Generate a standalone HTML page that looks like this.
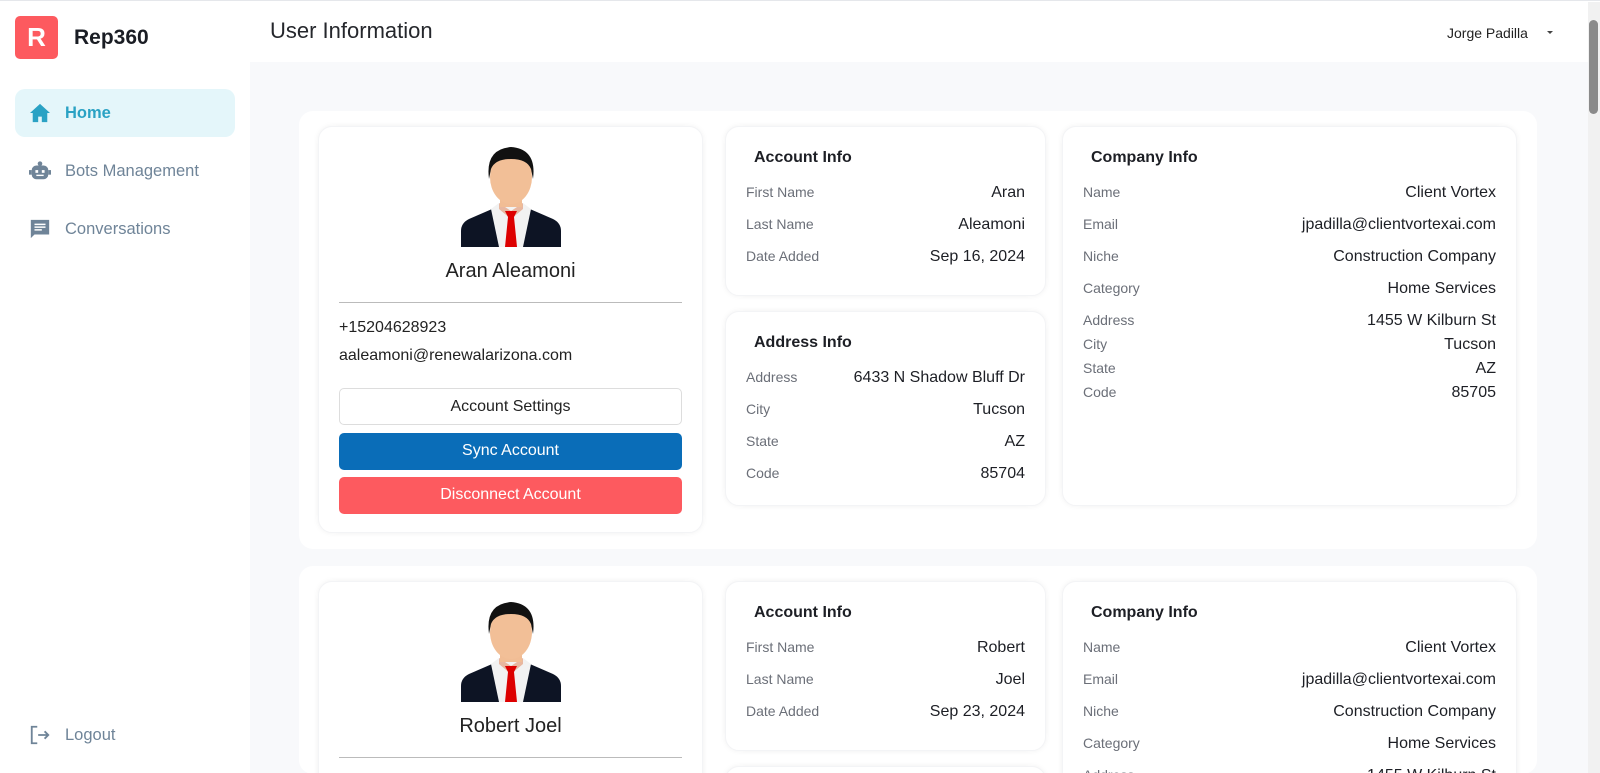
<!DOCTYPE html>
<html style="width:1600px;height:773px;overflow:hidden"><head><style>
*{box-sizing:border-box;margin:0;padding:0}
body{width:1600px;height:773px;overflow:hidden;font-family:"Liberation Sans",sans-serif;background:#fff;color:#1e1e24;position:relative;border-top:1px solid #e5e7eb}
.sb{position:absolute;left:0;top:0;width:250px;height:773px;background:#fff}
.logo{position:absolute;left:15px;top:15px;width:43px;height:43px;background:#fd5a5f;border-radius:5px;color:#fff;font-weight:bold;font-size:26px;text-align:center;line-height:43px}
.brand{position:absolute;left:74px;top:25px;font-size:21px;font-weight:bold;color:#1a1d24}
.nav{position:absolute;left:15px;width:220px;height:48px;border-radius:10px;display:flex;align-items:center;padding-left:14px;font-size:16.5px;color:#6f8498}
.nav svg{margin-right:14px}
.nav.act{background:#e4f6fa;color:#2aa2c4;font-weight:bold}
.main{position:absolute;left:250px;top:61px;width:1338px;height:712px;background:#f8f9fb}
.title{position:absolute;left:270px;top:17px;font-size:22px;color:#25272c}
.user{position:absolute;left:1447px;top:24px;font-size:14px;color:#222}
.caret{position:absolute;left:1547px;top:30px;border:3px solid transparent;border-top:3px solid #444}
.scroll{position:absolute;left:1588px;top:1px;width:12px;height:772px;background:#f1f1f1}
.thumb{position:absolute;left:1589px;top:19px;width:9px;height:94px;background:#8a8a8a;border-radius:5px}
.sec{position:absolute;left:299px;width:1238px;background:#fff;border-radius:14px;overflow:hidden}
.card{position:absolute;background:#fff;border-radius:14px;box-shadow:0 0 6px rgba(0,0,0,.06);border:1px solid #f3f4f6}
.av{position:absolute;left:142px;top:20px}
.nm{position:absolute;left:0;width:100%;text-align:center;top:133px;font-size:20px;color:#222}
.hr{position:absolute;left:20px;right:20px;top:175px;border-top:1px solid #bbb}
.ct{position:absolute;left:20px;font-size:16px;color:#222}
.btn{position:absolute;left:20px;right:20px;height:37px;border-radius:5px;text-align:center;line-height:36px;font-size:16px}
.h{position:absolute;left:28px;top:22px;font-size:16px;font-weight:bold;color:#1d1f25}
.r{position:absolute;left:20px;right:20px;font-size:14px;color:#6b6f78}
.r b{position:absolute;right:0;top:0;font-weight:normal;font-size:16px;color:#1d1f25}
</style></head><body>
<div class="sb">
<div class="logo">R</div><div class="brand">Rep360</div>
<div class="nav act" style="top:88px"><svg width="22" height="20" viewBox="0 0 24 22"><path d="M12 1L1 11h3v10h6v-6h4v6h6V11h3z" fill="#2aa2c4"/></svg>Home</div>
<div class="nav" style="top:146px"><svg width="22" height="22" viewBox="0 0 24 24"><circle cx="12" cy="4" r="2.5" fill="#6f8498"/><rect x="3" y="6" width="18" height="15" rx="5" fill="#6f8498"/><rect x="0" y="11" width="3" height="5" fill="#6f8498"/><rect x="21" y="11" width="3" height="5" fill="#6f8498"/><rect x="7" y="11" width="3" height="3" fill="#fff"/><rect x="14" y="11" width="3" height="3" fill="#fff"/><rect x="8" y="16" width="8" height="1.5" fill="#fff"/></svg>Bots Management</div>
<div class="nav" style="top:204px"><svg width="22" height="22" viewBox="0 0 24 24"><path d="M2 2h20v16H6l-4 4z" fill="#6f8498"/><path d="M6 7h12M6 10h12M6 13h8" stroke="#fff" stroke-width="1.6"/></svg>Conversations</div>
<div class="nav" style="top:710px"><svg width="22" height="22" viewBox="0 0 24 24" fill="none" stroke="#6f8498" stroke-width="2"><path d="M9 3H3v18h6M10 12h11M17 8l4 4-4 4"/></svg>Logout</div>
</div>
<div class="title">User Information</div>
<div class="user">Jorge Padilla</div><div class="caret"></div>
<div class="main"></div>
<div class="scroll"></div><div class="thumb"></div>

<div class="sec" style="top:110px;height:438px">
 <div class="card" style="left:19px;top:15px;width:385px;height:407px">
  <svg class="av" width="100" height="100" viewBox="0 0 100 100"><path d="M0 84q0-8 8-12l30-13h24l30 13q8 4 8 12v16H0z" fill="#0d1424"/><path d="M30 62l8-6h24l8 6-8 38H38z" fill="#f2f2f2"/><path d="M38 56l12 8 12-8v6L50 72 38 62z" fill="#e8b7a0"/><rect x="39" y="36" width="22" height="24" fill="#f1bd95"/><ellipse cx="50" cy="30" rx="21" ry="27" fill="#f2bf97"/><path d="M28 32q-4-30 22-32q26 2 22 32l-2-10q-4-10-20-10q-16 0-20 10z" fill="#111"/><path d="M44 64h12l-3 6 3 30H44l3-30z" fill="#d00"/></svg>
  <div class="nm">Aran Aleamoni</div><div class="hr"></div>
  <div class="ct" style="top:192px">+15204628923</div>
  <div class="ct" style="top:220px">aaleamoni@renewalarizona.com</div>
  <div class="btn" style="top:261px;border:1px solid #ddd;color:#222">Account Settings</div>
  <div class="btn" style="top:306px;background:#0a6db8;color:#fff">Sync Account</div>
  <div class="btn" style="top:350px;background:#fd5a5f;color:#fff">Disconnect Account</div>
 </div>
 <div class="card" style="left:426px;top:15px;width:321px;height:170px">
  <div class="h">Account Info</div>
  <div class="r" style="top:57px">First Name<b>Aran</b></div>
  <div class="r" style="top:89px">Last Name<b>Aleamoni</b></div>
  <div class="r" style="top:121px">Date Added<b>Sep 16, 2024</b></div>
 </div>
 <div class="card" style="left:426px;top:200px;width:321px;height:195px">
  <div class="h">Address Info</div>
  <div class="r" style="top:57px">Address<b>6433 N Shadow Bluff Dr</b></div>
  <div class="r" style="top:89px">City<b>Tucson</b></div>
  <div class="r" style="top:121px">State<b>AZ</b></div>
  <div class="r" style="top:153px">Code<b>85704</b></div>
 </div>
 <div class="card" style="left:763px;top:15px;width:455px;height:380px">
  <div class="h">Company Info</div>
  <div class="r" style="top:57px">Name<b>Client Vortex</b></div>
  <div class="r" style="top:89px">Email<b>jpadilla@clientvortexai.com</b></div>
  <div class="r" style="top:121px">Niche<b>Construction Company</b></div>
  <div class="r" style="top:153px">Category<b>Home Services</b></div>
  <div class="r" style="top:185px">Address<b>1455 W Kilburn St</b></div>
  <div class="r" style="top:209px">City<b>Tucson</b></div>
  <div class="r" style="top:233px">State<b>AZ</b></div>
  <div class="r" style="top:257px">Code<b>85705</b></div>
 </div>
</div>

<div class="sec" style="top:565px;height:208px">
 <div class="card" style="left:19px;top:15px;width:385px;height:407px">
  <svg class="av" width="100" height="100" viewBox="0 0 100 100"><path d="M0 84q0-8 8-12l30-13h24l30 13q8 4 8 12v16H0z" fill="#0d1424"/><path d="M30 62l8-6h24l8 6-8 38H38z" fill="#f2f2f2"/><path d="M38 56l12 8 12-8v6L50 72 38 62z" fill="#e8b7a0"/><rect x="39" y="36" width="22" height="24" fill="#f1bd95"/><ellipse cx="50" cy="30" rx="21" ry="27" fill="#f2bf97"/><path d="M28 32q-4-30 22-32q26 2 22 32l-2-10q-4-10-20-10q-16 0-20 10z" fill="#111"/><path d="M44 64h12l-3 6 3 30H44l3-30z" fill="#d00"/></svg>
  <div class="nm">Robert Joel</div><div class="hr"></div>
 </div>
 <div class="card" style="left:426px;top:15px;width:321px;height:170px">
  <div class="h">Account Info</div>
  <div class="r" style="top:57px">First Name<b>Robert</b></div>
  <div class="r" style="top:89px">Last Name<b>Joel</b></div>
  <div class="r" style="top:121px">Date Added<b>Sep 23, 2024</b></div>
 </div>
 <div class="card" style="left:426px;top:200px;width:321px;height:195px"></div>
 <div class="card" style="left:763px;top:15px;width:455px;height:380px">
  <div class="h">Company Info</div>
  <div class="r" style="top:57px">Name<b>Client Vortex</b></div>
  <div class="r" style="top:89px">Email<b>jpadilla@clientvortexai.com</b></div>
  <div class="r" style="top:121px">Niche<b>Construction Company</b></div>
  <div class="r" style="top:153px">Category<b>Home Services</b></div>
  <div class="r" style="top:185px">Address<b>1455 W Kilburn St</b></div>
 </div>
</div>
</body></html>
